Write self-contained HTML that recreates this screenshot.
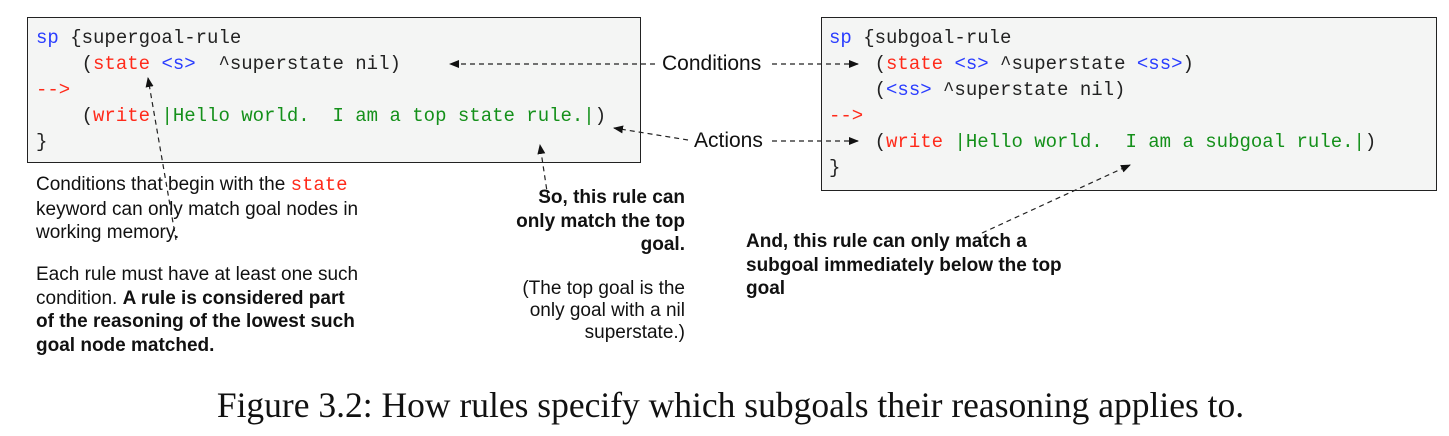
<!DOCTYPE html>
<html><head><meta charset="utf-8"><style>
body{margin:0;width:1449px;height:436px;background:#fff;position:relative;overflow:hidden;font-family:"Liberation Sans",sans-serif;color:#111}
.box{position:absolute;background:#f4f5f4;border:1.5px solid #222;box-sizing:border-box}
.code{position:absolute;font-family:"Liberation Mono",monospace;font-size:19px;line-height:26px;white-space:pre;color:#222}
.b{color:#2a3dff}.r{color:#ff2a1a}.g{color:#14901a}
.t{position:absolute;font-size:19px;line-height:23.5px;white-space:nowrap}
.lab{position:absolute;font-size:21px;line-height:24px}
b{font-weight:bold}
</style></head><body>
<div class="box" style="left:27px;top:17px;width:614px;height:146px"></div>
<div class="code" style="left:36px;top:25px"><span class="b">sp</span> {supergoal-rule
    (<span class="r">state</span> <span class="b">&lt;s&gt;</span>  ^superstate nil)
<span class="r">--&gt;</span>
    (<span class="r">write</span> <span class="g">|Hello world.  I am a top state rule.|</span>)
}</div>
<div class="box" style="left:821px;top:17px;width:616px;height:174px"></div>
<div class="code" style="left:829px;top:25px"><span class="b">sp</span> {subgoal-rule
    (<span class="r">state</span> <span class="b">&lt;s&gt;</span> ^superstate <span class="b">&lt;ss&gt;</span>)
    (<span class="b">&lt;ss&gt;</span> ^superstate nil)
<span class="r">--&gt;</span>
    (<span class="r">write</span> <span class="g">|Hello world.  I am a subgoal rule.|</span>)
}</div>
<div class="lab" style="left:662px;top:52px">Conditions</div>
<div class="lab" style="left:694px;top:129px">Actions</div>
<div class="t" style="left:36px;top:173px">Conditions that begin with the <span style="font-family:'Liberation Mono',monospace;color:#ff2a1a;font-size:19px">state</span><br>keyword can only match goal nodes in<br>working memory.</div>
<div class="t" style="left:36px;top:263px">Each rule must have at least one such<br>condition.  <b>A rule is considered part<br>of the reasoning of the lowest such<br>goal node matched.</b></div>
<div class="t" style="left:445px;top:186px;width:240px;text-align:right"><b>So, this rule can<br>only match the top<br>goal.</b></div>
<div class="t" style="left:445px;top:278px;width:240px;text-align:right;line-height:22px">(The top goal is the<br>only goal with a nil<br>superstate.)</div>
<div class="t" style="left:746px;top:230px"><b>And, this rule can only match a<br>subgoal immediately below the top<br>goal</b></div>
<svg style="position:absolute;left:0;top:0" width="1449" height="436">
<defs><marker id="a" markerWidth="10" markerHeight="8" refX="9" refY="4" orient="auto" markerUnits="userSpaceOnUse"><path d="M0,0L10,4L0,8z" fill="#111"/></marker></defs>
<g stroke="#222" stroke-width="1.2" stroke-dasharray="5,4" fill="none">
<line x1="655" y1="64" x2="450" y2="64" marker-end="url(#a)"/>
<line x1="772" y1="64" x2="858" y2="64" marker-end="url(#a)"/>
<line x1="688" y1="140" x2="614" y2="128" marker-end="url(#a)"/>
<line x1="772" y1="141" x2="858" y2="141" marker-end="url(#a)"/>
<line x1="176" y1="240" x2="148" y2="78" marker-end="url(#a)"/>
<line x1="548" y1="198" x2="540" y2="145" marker-end="url(#a)"/>
<line x1="982" y1="233" x2="1130" y2="165" marker-end="url(#a)"/>
</g></svg>
<div style="position:absolute;left:6px;width:1449px;top:384px;text-align:center;font-family:'Liberation Serif',serif;font-size:35.5px;color:#111">Figure 3.2: How rules specify which subgoals their reasoning applies to.</div>
</body></html>
